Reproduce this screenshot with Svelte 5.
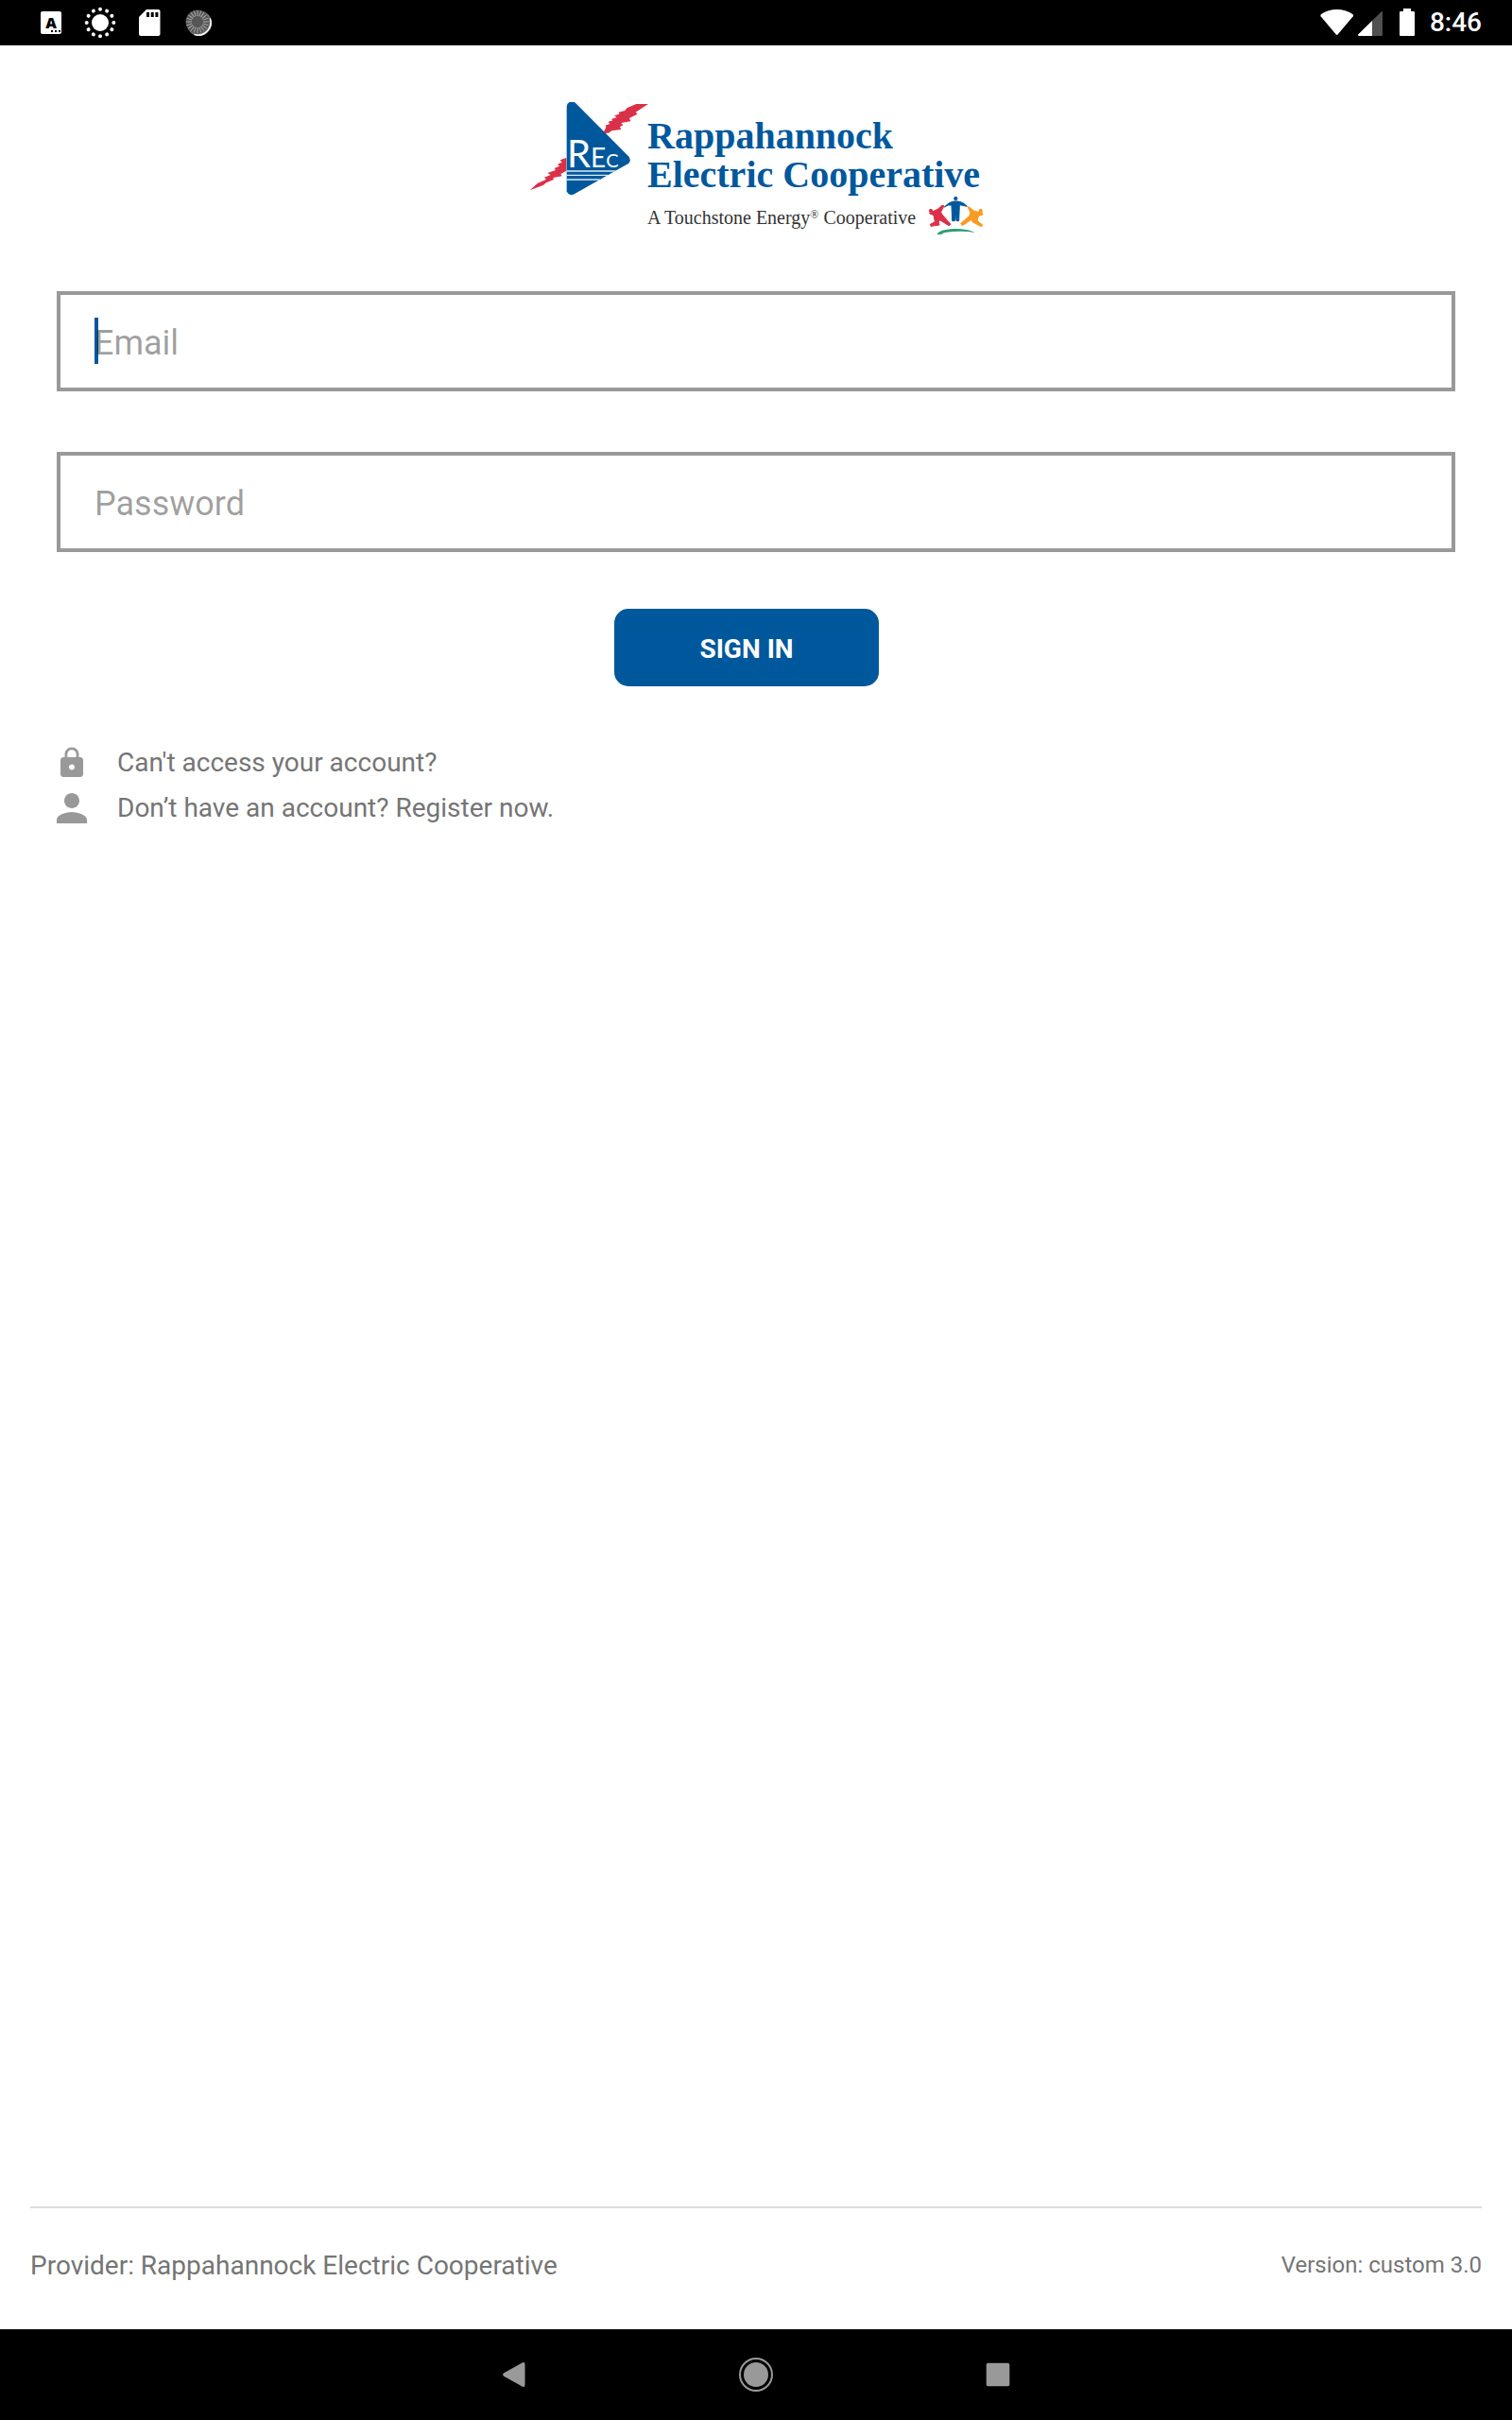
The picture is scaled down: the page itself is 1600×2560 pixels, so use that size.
<script lang="ts">
  let email = $state('');
  let password = $state('');

  const provider = 'Rappahannock Electric Cooperative';
  const version = 'custom 3.0';

  const sunDots = Array.from({ length: 12 }, (_, i) => i * 30);
  const spinnerTicks = Array.from({ length: 20 }, (_, i) => i * 18);

  function handleSubmit(e: Event) {
    e.preventDefault();
  }
</script>

<div class="screen">
  <header class="status-bar">
    <div class="status-group status-group--left">
      <svg width="22" height="48" viewBox="0 0 22 48" aria-hidden="true">
        <rect y="12" width="22" height="24" rx="2" fill="#fff" />
        <text x="11" y="30" class="keyboard-letter">A</text>
        <path d="M11 32h2v2h-2zM15 32h2v2h-2zM19 32h2v2h-2z" fill="#000" />
      </svg>
      <svg width="34" height="48" viewBox="0 0 34 48" aria-hidden="true">
        <circle cx="17" cy="24" r="9" fill="#fff" />
        {#each sunDots as angle (angle)}
          <circle cx="17" cy="9.700" r="2" fill="#fff" transform="rotate({angle} 17 24)" />
        {/each}
      </svg>
      <svg width="22" height="48" viewBox="0 0 22 48" aria-hidden="true">
        <path d="M8 10h12.500a2 2 0 0 1 2 2v24a2 2 0 0 1-2 2H2a2 2 0 0 1-2-2V18z" fill="#fff" />
        <path d="M8 13h3v5H8zM12.700 13h3v5h-3zM17.400 13h3v5h-3z" fill="#000" />
      </svg>
      <svg width="34" height="48" viewBox="0 0 34 48" aria-hidden="true">
        <circle cx="17.700" cy="24.500" r="13.300" fill="#777" />
        <path d="M29.500 19.500A13.300 13.300 0 0 1 12.500 36.600A14 14 0 0 0 29.500 19.500z" fill="#fff" stroke="#fff" stroke-width="1" />
        <circle cx="16" cy="23" r="12.500" fill="#555" />
        {#each spinnerTicks as angle (angle)}
          <path d="M16 11v6" stroke="#aaa" stroke-width="1" transform="rotate({angle} 16 23)" />
        {/each}
      </svg>
    </div>

    <div class="status-group status-group--right">
      <div class="signals">
        <svg width="36" height="48" viewBox="0 0 36 48" aria-hidden="true">
          <path d="M.6 17.200Q-.2 16 1 15Q8.500 10 17.700 10T34.400 15Q35.600 16 34.800 17.200L18.800 36.300Q17.700 37.500 16.600 36.300z" fill="#fff" />
        </svg>
        <svg width="28" height="48" viewBox="0 0 28 48" aria-hidden="true">
          <path d="M26 12.500V37a1 1 0 0 1-1 1H1Q-.4 37.400.5 36.300L24.600 12.400Q25.600 11.600 26 12.500z" fill="#505050" />
          <path d="M15 22V38H1Q-.4 37.400.5 36.300z" fill="#fff" />
        </svg>
      </div>
      <svg width="16" height="48" viewBox="0 0 16 48" aria-hidden="true">
        <path d="M4 9h8v3h3a1 1 0 0 1 1 1v24a1 1 0 0 1-1 1H1a1 1 0 0 1-1-1V13a1 1 0 0 1 1-1h3z" fill="#fff" />
      </svg>
      <span class="clock">8:46</span>
    </div>
  </header>

  <main class="content">
    <svg class="logo" width="480" height="140" viewBox="0 0 480 140" role="img" aria-label="Rappahannock Electric Cooperative">
      <!-- emblem -->
      <g transform="translate(-10 -13) scale(.33333)">
        <path
          d="M408 45L370 45L340 58L334 66L314 71L316 77L300 82L308 88L292 92L294 98L280 101L286 108L272 113L274 119L264 138L282 137L292 130L322 126L318 118L328 112L322 105L352 100L348 90L374 77L368 71z"
          fill="#db3148"
        />
        <path
          d="M148 216L128 223L134 230L120 236L126 242L110 249L114 255L88 264L98 270L78 278L84 284L56 297L32 319L74 303L84 295L108 285L106 279L134 274L130 267L148 257z"
          fill="#db3148"
        />
        <path
          d="M149 53Q150 39 165 37Q172 37 178 43L345 211Q356 224 345 234L173 331Q157 339 149 322z"
          fill="#00589c"
        />
        <path d="M149 258H304M149 271H279M149 285H254" stroke="#dcebf5" stroke-width="4" />
      </g>
      <text x="40" y="69" class="monogram">R<tspan class="monogram-e">E</tspan><tspan class="monogram-c">C</tspan></text>
      <text x="125" y="49" class="logo-name">Rappahannock</text>
      <text x="125" y="90" class="logo-name">Electric Cooperative</text>
      <text x="125" y="129" class="logo-tagline">A Touchstone Energy<tspan class="logo-mark" dy="-6">®</tspan><tspan dy="6">{' '}Cooperative</tspan></text>

      <!-- three figures -->
      <g transform="translate(230 -13) scale(.33333)" stroke-width="3" stroke-linejoin="round">
        <g fill="#00589c" stroke="#00589c">
          <path d="M628 372Q644 355 658 354L670 354Q688 355 700 370L686 367L676 365L674 416L666 416L664 390L661 416L653 416L651 366L640 366z" />
          <circle cx="664" cy="345" r="5" />
        </g>
        <g fill="#db3148" stroke="#db3148">
          <path d="M580 392L594 385Q606 382 620 367L627 368L617 388L621 396L648 427L642 431L615 414L609 416L612 429L585 433L583 427L598 419L594 398z" />
          <circle cx="585" cy="384" r="5" />
        </g>
        <g fill="#f79b22" stroke="#f79b22">
          <path d="M701 369Q710 374 723 385L750 391L750 396L737 400L732 415L750 430L745 434L718 420L714 412L685 431L680 424L707 401L711 390z" />
          <circle cx="743" cy="384" r="5" />
        </g>
        <path d="M605 459Q610 443 660 441Q704 441 726 453Q690 447 655 450Q623 452 618 459z" fill="#2a9d74" />
      </g>
    </svg>

    <form class="login-form" onsubmit={handleSubmit}>
      <div class="field">
        <span class="caret"></span>
        <input class="field-input" type="email" aria-label="Email" placeholder="Email" bind:value={email} />
      </div>
      <div class="field">
        <input class="field-input" type="password" aria-label="Password" placeholder="Password" bind:value={password} />
      </div>
      <button class="sign-in" type="submit">SIGN IN</button>
    </form>

    <nav class="help-links" aria-label="Account help">
      <a class="help-link" href="#recover">
        <span class="help-icon">
          <svg width="36" height="36" viewBox="0 0 24 24" aria-hidden="true">
            <path
              d="M18 8h-1V6c0-2.760-2.240-5-5-5S7 3.240 7 6v2H6c-1.100 0-2 .9-2 2v10c0 1.100.9 2 2 2h12c1.100 0 2-.9 2-2V10c0-1.100-.9-2-2-2zm-6 9c-1.100 0-2-.9-2-2s.9-2 2-2 2 .9 2 2-.9 2-2 2zm3.100-9H8.900V6c0-1.710 1.390-3.100 3.100-3.100s3.100 1.390 3.100 3.100v2z"
              fill="#999"
            />
          </svg>
        </span>
        Can't access your account?
      </a>
      <a class="help-link" href="#register">
        <span class="help-icon">
          <svg width="48" height="48" viewBox="0 0 24 24" aria-hidden="true">
            <path d="M12 12c2.210 0 4-1.790 4-4s-1.790-4-4-4-4 1.790-4 4 1.790 4 4 4zm0 2c-2.670 0-8 1.340-8 4v2h16v-2c0-2.660-5.330-4-8-4z" fill="#999" />
          </svg>
        </span>
        Don’t have an account? Register now.
      </a>
    </nav>
  </main>

  <footer class="footer">
    <span class="provider">Provider: {provider}</span>
    <span class="version">Version: {version}</span>
  </footer>

  <nav class="nav-bar" aria-label="System">
    <button class="nav-button" type="button" aria-label="Back">
      <svg width="48" height="48" viewBox="0 0 48 48" aria-hidden="true">
        <path d="M13.200 22.300L33 11.300Q35.500 10.300 35.500 13V35Q35.500 37.700 33 36.700L13.200 25.700Q11 24 13.200 22.300z" fill="#999" />
      </svg>
    </button>
    <button class="nav-button" type="button" aria-label="Home">
      <svg width="48" height="48" viewBox="0 0 48 48" aria-hidden="true">
        <circle cx="24" cy="24" r="13" fill="#999" />
        <circle cx="24" cy="24" r="17" fill="none" stroke="#999" stroke-width="2" />
      </svg>
    </button>
    <button class="nav-button" type="button" aria-label="Recent apps">
      <svg width="48" height="48" viewBox="0 0 48 48" aria-hidden="true">
        <rect x="11.700" y="11.700" width="24.600" height="24.600" rx="2" fill="#999" />
      </svg>
    </button>
  </nav>
</div>

<style>
  :global(body) {
    margin: 0;
    background: #fff;
  }

  .screen {
    display: flex;
    flex-direction: column;
    min-height: 100vh;
    font-family: Roboto, 'Liberation Sans', sans-serif;
    font-size: 28px;
    color: #757575;
  }

  svg {
    display: block;
  }

  /* Status bar */
  .status-bar {
    display: flex;
    justify-content: space-between;
    height: 48px;
    padding: 0 32px 0 43px;
    background: #000;
    color: #fff;
  }

  .status-group {
    display: flex;
    align-items: center;
  }

  .status-group--left {
    gap: 24px;
  }

  .status-group--right {
    gap: 16px;
  }

  .status-group svg {
    overflow: visible;
  }

  .signals {
    display: flex;
    gap: 4px;
  }

  .keyboard-letter {
    font-family: 'Open Sans', sans-serif;
    font-size: 16px;
    font-weight: 800;
    text-anchor: middle;
    fill: #000;
  }

  .clock {
    line-height: 50px;
    font-weight: 500;
  }

  /* Sign in */
  .content {
    flex: 1;
    display: flex;
    flex-direction: column;
    padding: 60px;
  }

  .logo {
    align-self: center;
    max-width: 100%;
    margin-bottom: 60px;
  }

  .monogram {
    font-family: Lato, sans-serif;
    font-size: 40px;
    fill: #fff;
  }

  .monogram-e {
    font-size: 28px;
  }

  .monogram-c {
    font-size: 20px;
  }

  .logo-name {
    font-family: 'Liberation Serif', serif;
    font-size: 40px;
    font-weight: 700;
    fill: #00589c;
  }

  .logo-tagline {
    font-family: 'Liberation Serif', serif;
    font-size: 20px;
    fill: #333;
  }

  .logo-mark {
    font-size: 12px;
  }

  .login-form {
    display: flex;
    flex-direction: column;
  }

  .field {
    position: relative;
    margin-bottom: 64px;
  }

  .field:last-of-type {
    margin-bottom: 60px;
  }

  .field-input {
    display: block;
    position: relative;
    box-sizing: border-box;
    width: 100%;
    height: 106px;
    padding: 4px 36px 0;
    border: 4px solid #999;
    border-radius: 0;
    background: transparent;
    font: inherit;
    font-size: 36px;
    color: #333;
    caret-color: #00589c;
    outline: none;
  }

  .field-input::placeholder {
    color: rgba(0, 0, 0, 0.38);
    opacity: 1;
  }

  .caret {
    position: absolute;
    left: 40px;
    top: 28px;
    width: 4px;
    height: 49px;
    background: #00589c;
  }

  .sign-in {
    align-self: center;
    width: 280px;
    height: 82px;
    margin-right: 20px;
    padding: 2px 0 0;
    border: none;
    border-radius: 15px;
    background: #00589c;
    color: #fff;
    font: inherit;
    font-weight: 700;
    cursor: pointer;
  }

  .help-links {
    display: flex;
    flex-direction: column;
    align-items: flex-start;
    margin-top: 57px;
  }

  .help-link {
    display: flex;
    align-items: center;
    gap: 32px;
    height: 48px;
    line-height: 50px;
    color: inherit;
    text-decoration: none;
  }

  .help-icon {
    display: flex;
    justify-content: center;
    width: 32px;
  }

  .help-icon svg {
    flex: none;
  }

  /* Footer */
  .footer {
    display: flex;
    align-items: center;
    justify-content: space-between;
    height: 120px;
    margin: 0 32px;
    padding-bottom: 8px;
    border-top: 2px solid #ddd;
  }

  .version {
    font-size: 24px;
  }

  .nav-bar {
    display: flex;
    align-items: center;
    justify-content: center;
    gap: 160px;
    height: 96px;
    background: #000;
  }

  .nav-button {
    display: flex;
    align-items: center;
    justify-content: center;
    width: 96px;
    height: 96px;
    padding: 0;
    border: none;
    background: none;
  }
</style>
